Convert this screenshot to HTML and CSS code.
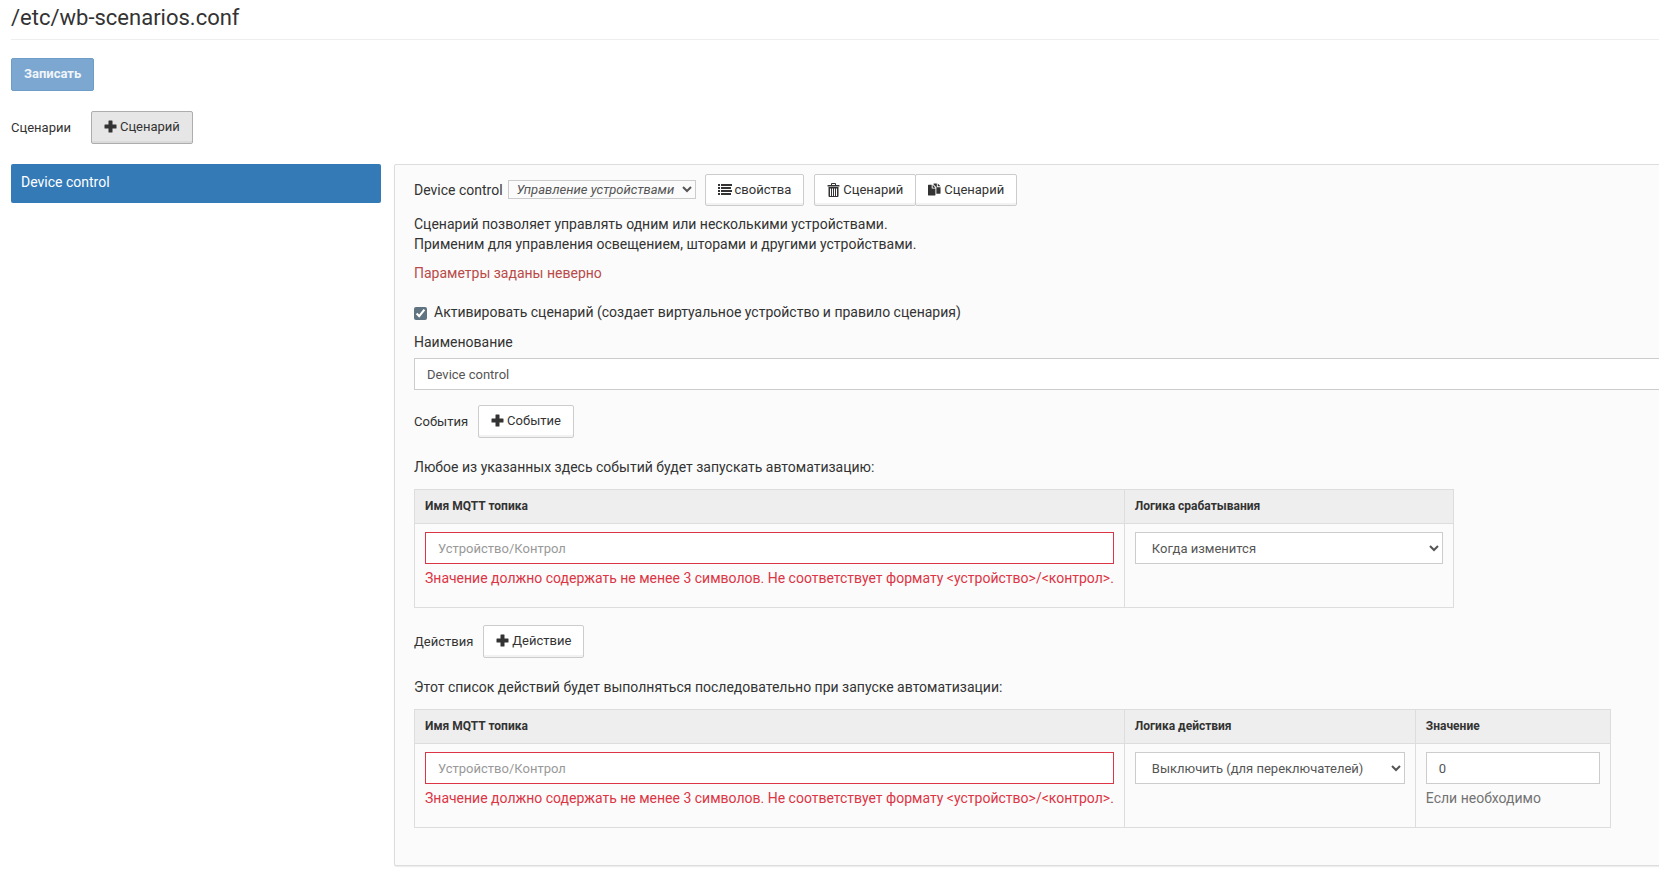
FILE: index.html
```html
<!DOCTYPE html>
<html lang="ru">
<head>
<meta charset="utf-8">
<title>/etc/wb-scenarios.conf</title>
<link rel="stylesheet" href="styles.css">
</head>
<body>
<svg class="sprite" aria-hidden="true">
  <symbol id="plus" viewBox="0 0 13 13"><path d="M4.500 1q0-.5.5-.5h3q.5 0 .5.500v3.500h3.500q.5 0 .5.500v3q0 .5-.5.500H8.500v3.500q0 .5-.5.500H5q-.5 0-.5-.5V8.500H1q-.5 0-.5-.5V5q0-.5.500-.5h3.500z"/></symbol>
  <symbol id="list" viewBox="0 0 14 13"><path d="M0 1h2v2H0zM3 1h11v2H3zM0 4h2v2H0zM3 4h10v2H3zM0 7h2v2H0zM3 7h11v2H3zM0 10h2v2H0zM3 10h10v2H3z"/></symbol>
  <symbol id="trash" viewBox="0 0 13 14"><path fill-rule="evenodd" d="M4 2V1q0-1 1-1h3q1 0 1 1v1h3q.5 0 .5.500V3.500H.5V2.500q0-.5.500-.5zM5 1v1h3V1zM1.500 4h10V13q0 1-1 1h-8q-1 0-1-1zM3 5.500V13h1V5.500zM5 5.500V13h1V5.500zM7 5.500V13h1V5.500zM9 5.500V13h1V5.500z"/></symbol>
  <symbol id="copy" viewBox="0 0 14 13"><path d="M0 2q0-.5.5-.5H4v4h4v7q0 .5-.5.500H.5q-.5 0-.5-.5zM5 1.500l3 3H5zM6 0h3.500v4h4v6.500q0 .5-.5.500H9V4L6 1zM10.500 0l3 3h-3z"/></symbol>
</svg>
<main class="page">
  <h1 class="title">/etc/wb-scenarios.conf</h1>
  <button class="btn btn-primary" type="button" disabled>Записать</button>
  <div class="toolbar toolbar-main">
    <span>Сценарии</span>
    <button class="btn btn-active" type="button"><svg class="icon"><use href="#plus"/></svg>Сценарий</button>
  </div>
  <div class="columns">
    <nav class="sidebar"><a class="tab" href="#scenario">Device control</a></nav>
    <section class="panel" id="scenario">
      <div class="heading">
        <label for="kind">Device control</label>
        <select class="kind" id="kind"><option>Управление устройствами</option></select>
        <button class="btn" type="button"><svg class="icon icon-wide"><use href="#list"/></svg>свойства</button>
        <div class="group">
          <button class="btn" type="button"><svg class="icon icon-tall"><use href="#trash"/></svg>Сценарий</button>
          <button class="btn" type="button"><svg class="icon"><use href="#copy"/></svg>Сценарий</button>
        </div>
      </div>
      <p class="text">Сценарий позволяет управлять одним или несколькими устройствами.<br>Применим для управления освещением, шторами и другими устройствами.</p>
      <p class="text invalid">Параметры заданы неверно</p>
      <div class="check">
        <input type="checkbox" id="enable" checked>
        <label for="enable">Активировать сценарий (создает виртуальное устройство и правило сценария)</label>
      </div>
      <label class="label" for="name">Наименование</label>
      <input class="control" id="name" type="text" value="Device control">

      <div class="toolbar">
        <span>События</span>
        <button class="btn" type="button"><svg class="icon"><use href="#plus"/></svg>Событие</button>
      </div>
      <p class="text intro">Любое из указанных здесь событий будет запускать автоматизацию:</p>
      <table class="table">
        <thead><tr><th>Имя MQTT топика</th><th>Логика срабатывания</th></tr></thead>
        <tbody><tr>
          <td><input class="control error" type="text" aria-label="Имя MQTT топика" placeholder="Устройство/Контрол"><p class="hint error-text">Значение должно содержать не менее 3 символов. Не соответствует формату &lt;устройство&gt;/&lt;контрол&gt;.</p></td>
          <td class="col-trigger"><select class="control" aria-label="Логика срабатывания"><option>Когда изменится</option></select></td>
        </tr></tbody>
      </table>

      <div class="toolbar">
        <span>Действия</span>
        <button class="btn" type="button"><svg class="icon"><use href="#plus"/></svg>Действие</button>
      </div>
      <p class="text intro">Этот список действий будет выполняться последовательно при запуске автоматизации:</p>
      <table class="table">
        <thead><tr><th>Имя MQTT топика</th><th>Логика действия</th><th>Значение</th></tr></thead>
        <tbody><tr>
          <td><input class="control error" type="text" aria-label="Имя MQTT топика" placeholder="Устройство/Контрол"><p class="hint error-text">Значение должно содержать не менее 3 символов. Не соответствует формату &lt;устройство&gt;/&lt;контрол&gt;.</p></td>
          <td class="col-action"><select class="control" aria-label="Логика действия"><option>Выключить (для переключателей)</option></select></td>
          <td class="col-value"><input class="control" type="text" aria-label="Значение" value="0"><p class="hint">Если необходимо</p></td>
        </tr></tbody>
      </table>
    </section>
  </div>
</main>
</body>
</html>
```
FILE: styles.css
```css
* { box-sizing: border-box; }

body {
  margin: 0;
  background: #fff;
  color: #333;
  font: 14px/20px Roboto, "Noto Sans", sans-serif;
  overflow-x: hidden;
}

p { margin: 0; }

button, input, select { font-family: inherit; }

.sprite { position: absolute; width: 0; height: 0; }

.page { padding: 0 0 20px 11px; }

.title {
  margin: 0 0 18px;
  padding: 3px 0 6px;
  border-bottom: 1px solid #eee;
  font-size: 22px;
  line-height: 30px;
  font-weight: 400;
}

.btn {
  display: inline-flex;
  align-items: center;
  gap: 3px;
  height: 32px;
  padding: 0 12px 1px;
  border: 1px solid #ccc;
  border-radius: 2px;
  background: #fff;
  box-shadow: inset 0 -2px 0 rgba(0, 0, 0, .05);
  color: #333;
  font-size: 13px;
  line-height: 18px;
  white-space: nowrap;
}

.btn-primary {
  height: 33px;
  padding-bottom: 2px;
  border-color: #6e9dc8;
  background: #7ba7d1;
  box-shadow: none;
  color: #f0f5fa;
  font-weight: 700;
}

.btn-active {
  border-color: #adadad;
  background: #e6e6e6;
}

.icon { width: 13px; height: 13px; fill: #333; }
.icon-wide { width: 14px; }
.icon-tall { height: 14px; }

.toolbar {
  display: flex;
  align-items: center;
  gap: 10px;
  margin-top: 15px;
  font-size: 13px;
}

.toolbar .btn { height: 33px; padding-bottom: 2px; }

.toolbar-main { gap: 20px; margin: 20px 0; }

.columns { display: flex; align-items: flex-start; gap: 13px; }

.sidebar { flex: 0 0 370px; }

.tab {
  display: block;
  height: 39px;
  padding: 8px 10px;
  border-radius: 2px;
  background: #337ab7;
  color: #fff;
  text-decoration: none;
}

.panel {
  flex: 1 0 auto;
  margin-right: -20px;
  padding: 9px 0 37px 19px;
  border: 1px solid #ddd;
  border-radius: 2px;
  background: #fbfbfb;
  box-shadow: 0 1px 1px #ececec;
}

.heading { display: flex; align-items: center; }
.heading label { padding-bottom: 1px; }

.kind {
  width: 188px;
  height: 19px;
  margin: 0 9px 1px 5px;
  padding: 0 0 0 4px;
  border: 1px solid #ccc;
  border-radius: 0;
  background: #fbfbfb;
  color: #555;
  font-size: 13px;
  font-style: italic;
}

.group { display: flex; margin-left: 10px; }
.group .btn + .btn { margin-left: -1px; }

.text { margin-top: 8px; }
.invalid { margin-top: 9px; color: #b94a48; }

.check {
  display: flex;
  align-items: center;
  gap: 7px;
  margin: 19px 0 10px;
}

.check input {
  width: 13px;
  height: 13px;
  margin: 2px 0 0;
  accent-color: #607380;
}

.label { display: block; margin-bottom: 6px; }

.control {
  display: block;
  width: 100%;
  height: 32px;
  padding: 6px 12px;
  border: 1px solid #ccc;
  border-radius: 0;
  background: #fff;
  color: #555;
  font-size: 13px;
  line-height: 18px;
}

.control::placeholder { color: #999; }

.error { border-color: #dc3545; }
.error-text.hint { color: #dc3545; }

.intro { margin: 19px 0 12px; }

.table { border-collapse: collapse; }

.table + .toolbar { margin-top: 17px; }

.table th, .table td {
  padding: 8px 10px;
  border: 1px solid #ddd;
  text-align: left;
  vertical-align: top;
}

.table th {
  padding: 7px 10px 8px;
  background: #eee;
  font-size: 12px;
  line-height: 18px;
}

.table td { height: 84px; }

.hint {
  margin-top: 4px;
  color: #737373;
  white-space: nowrap;
}

.col-trigger { width: 329px; }
.col-action { width: 291px; }
.col-value { width: 195px; }
```
